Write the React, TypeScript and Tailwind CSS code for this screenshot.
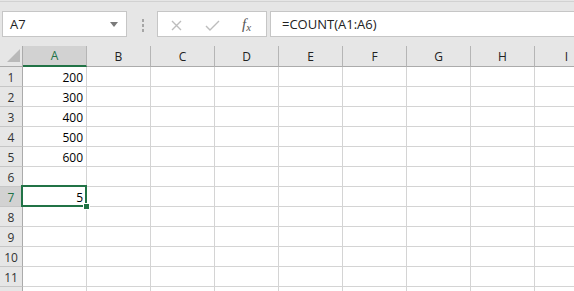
import React from "react";

const cols = ["A", "B", "C", "D", "E", "F", "G", "H", "I"];
const data: Record<number, string> = { 1: "200", 2: "300", 3: "400", 4: "500", 5: "600", 7: "5" };
const rows = [1, 2, 3, 4, 5, 6, 7, 8, 9, 10, 11, 12];

export default function App() {
  return (
    <div
      className="relative w-[574px] h-[291px] overflow-hidden bg-white text-black"
      style={{ fontFamily: '"Open Sans", "Noto Sans", sans-serif' }}
    >
      {/* Formula bar area */}
      <div className="h-[46px] bg-[#e6e6e6] pt-[1px]">
        <div className="h-[1px] bg-[#d2d2d2]" />
        <div className="flex items-start pt-[9px]">
          <div className="ml-[2px] w-[125px] h-[26px] bg-white border border-[#c6c6c6] flex items-center justify-between pl-[7px] pr-[8px] pt-[2px] text-[13px] text-[#222]">
            <span>A7</span>
            <svg width="8" height="5" viewBox="0 0 8 5" className="mt-[-2px]">
              <path d="M0 0 L8 0 L4 5 Z" fill="#7a7a7a" />
            </svg>
          </div>
          <div className="w-[30px] h-[26px] flex flex-col items-center justify-center gap-[2px] pl-[1px] pt-[2px]">
            <div className="w-[2px] h-[3px] bg-[#a6a6a6]" />
            <div className="w-[2px] h-[3px] bg-[#a6a6a6]" />
            <div className="w-[2px] h-[3px] bg-[#a6a6a6]" />
          </div>
          <div className="w-[110px] h-[26px] bg-white border border-[#c6c6c6] flex items-center">
            <svg width="11" height="11" viewBox="0 0 11 11" className="ml-[13px] mt-[2px]">
              <path d="M1 1 L10 10 M10 1 L1 10" stroke="#bdbdbd" strokeWidth="1.4" fill="none" />
            </svg>
            <svg width="15" height="11" viewBox="0 0 15 11" className="ml-[23px] mt-[2px]">
              <path d="M1 6 L5 10 L14 1" stroke="#bdbdbd" strokeWidth="1.4" fill="none" />
            </svg>
            <span
              className="ml-[22px] mt-[1px] italic text-[15px] text-[#555] leading-none"
              style={{ fontFamily: '"Liberation Serif", "DejaVu Serif", serif' }}
            >
              f<span className="text-[11px] relative top-[2px]">x</span>
            </span>
          </div>
          <div className="ml-[3px] flex-1 h-[26px] bg-white border border-[#c6c6c6] border-r-0 flex items-center pl-[11px] pt-[2px] text-[13px] text-[#222]">
            =COUNT(A1:A6)
          </div>
        </div>
      </div>

      {/* Grid */}
      <div className="relative">
        {/* Header row */}
        <div className="flex h-[21px]">
          <div className="relative w-[23px] shrink-0 bg-[#e6e6e6] border-r border-b border-[#ababab]">
            <svg width="14" height="14" viewBox="0 0 14 14" className="absolute left-[7px] top-[3px]">
              <path d="M0 13 L13 13 L13 0 Z" fill="#b9b9b9" />
            </svg>
          </div>
          {cols.map((c) =>
            c === "A" ? (
              <div
                key={c}
                className="w-[64px] shrink-0 bg-[#d2d2d2] border-r border-[#b5b5b5] border-b-2 border-b-[#217346] flex items-center justify-center pt-[1px] text-[12px] text-[#217346]"
              >
                {c}
              </div>
            ) : (
              <div
                key={c}
                className="w-[64px] shrink-0 bg-[#e6e6e6] border-r border-[#b5b5b5] border-b border-b-[#ababab] flex items-center justify-center pt-[1px] text-[12px] text-[#222]"
              >
                {c}
              </div>
            )
          )}
        </div>
        {rows.map((r) => (
          <div key={r} className="flex h-[20px]">
            <div
              className={
                r === 7
                  ? "w-[23px] shrink-0 bg-[#d2d2d2] border-r border-b border-r-[#ababab] border-b-[#c6c6c6] flex items-center justify-center pt-[2px] text-[12px] text-[#217346]"
                  : "w-[23px] shrink-0 bg-[#e6e6e6] border-r border-b border-r-[#ababab] border-b-[#c6c6c6] flex items-center justify-center pt-[2px] text-[12px] text-[#333]"
              }
            >
              {r}
            </div>
            {cols.map((c) => (
              <div
                key={c}
                className="w-[64px] shrink-0 border-r border-b border-[#d4d4d4] flex items-center justify-end pr-[3px] pt-[2px] text-[12px]"
              >
                {c === "A" && data[r] ? data[r] : ""}
              </div>
            ))}
          </div>
        ))}

        {/* Selection */}
        <div className="absolute left-[21px] top-[139px] w-[66px] h-[22px] border-2 border-[#217346]" />
        <div className="absolute left-[83px] top-[157px] w-[7px] h-[7px] bg-[#217346] border border-white" />
      </div>
    </div>
  );
}
